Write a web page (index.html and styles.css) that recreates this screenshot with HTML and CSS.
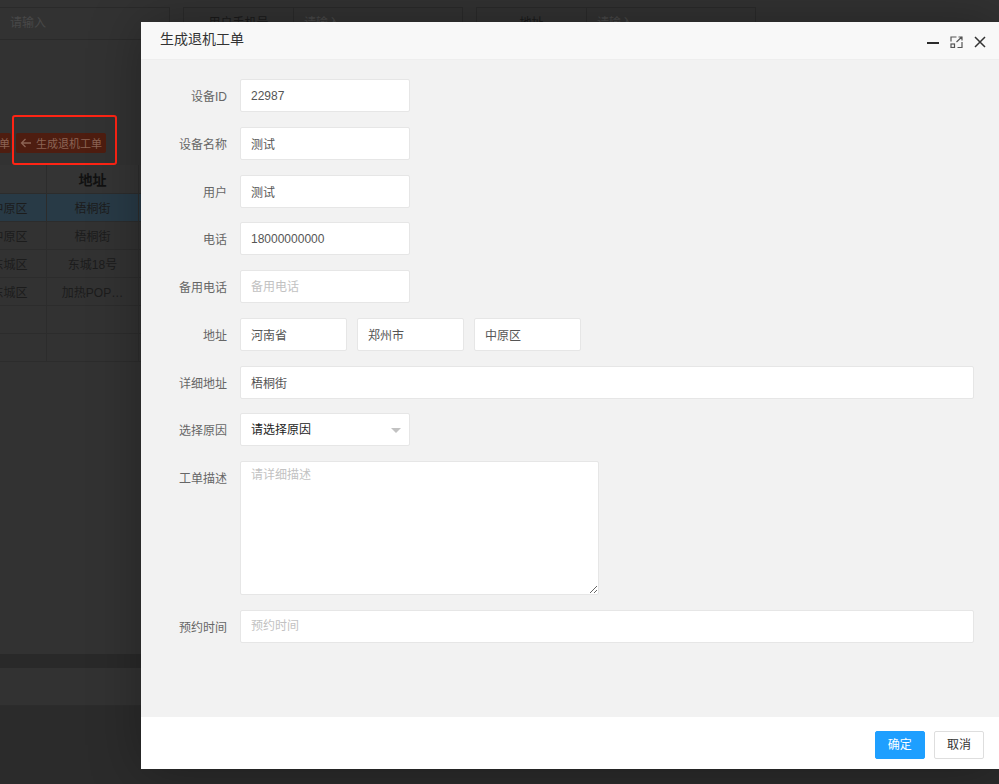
FILE: index.html
```html
<!DOCTYPE html>
<html lang="zh-CN">
<head>
  <meta charset="UTF-8">
  <title>生成退机工单</title>
  <link rel="stylesheet" href="styles.css">
</head>
<body>
  <div class="page">
    <div class="search-row">
      <div class="s-box s-input s-first">请输入</div>
      <div class="s-box s-label">用户手机号</div>
      <div class="s-box s-input">请输入</div>
      <div class="s-box s-label">地址</div>
      <div class="s-box s-input">请输入</div>
    </div>

    <div class="toolbar">
      <span class="tool-btn tool-cut">单</span>
      <span class="tool-btn">
        <svg width="12" height="12" viewBox="0 0 12 12"><path d="M11 6H1.5M5.5 2L1.5 6l4 4" fill="none" stroke="#8c6454" stroke-width="1.3"/></svg>
        生成退机工单
      </span>
    </div>

    <div class="grid">
      <div class="grid-row grid-head"><div class="c1"></div><div class="c2">地址</div><div class="c3"></div></div>
      <div class="grid-row grid-on"><div class="c1">中原区</div><div class="c2">梧桐街</div><div class="c3"></div></div>
      <div class="grid-row"><div class="c1">中原区</div><div class="c2">梧桐街</div><div class="c3"></div></div>
      <div class="grid-row"><div class="c1">东城区</div><div class="c2">东城18号</div><div class="c3"></div></div>
      <div class="grid-row"><div class="c1">东城区</div><div class="c2">加热POP…</div><div class="c3"></div></div>
      <div class="grid-row"><div class="c1"></div><div class="c2"></div><div class="c3"></div></div>
      <div class="grid-row"><div class="c1"></div><div class="c2"></div><div class="c3"></div></div>
    </div>

    <div class="grid-fill"></div>
    <div class="grid-scroll"></div>
    <div class="grid-pager"></div>
    <div class="page-foot"></div>
  </div>

  <div class="mark"></div>

  <div class="layer">
    <div class="layer-title">
      生成退机工单
      <span class="layer-setwin">
        <svg width="12" height="12" viewBox="0 0 12 12"><rect x="0" y="6" width="12" height="2" fill="#2b2b2b"/></svg>
        <svg width="13" height="12" viewBox="0 0 13 12"><path d="M1 5.5V1h5.5M12 6v5.5H7.5M6.5 6L12 0.8M8.5 1H12v3.5" fill="none" stroke="#555" stroke-width="1.2"/><rect x="1" y="8" width="3.5" height="3.5" fill="none" stroke="#555" stroke-width="1.2"/></svg>
        <svg width="12" height="12" viewBox="0 0 12 12"><path d="M1 1l10 10M11 1L1 11" fill="none" stroke="#333" stroke-width="1.5"/></svg>
      </span>
    </div>

    <div class="layer-content">
      <form class="form">
        <div class="form-item">
          <label class="form-label">设备ID</label>
          <input class="input" value="22987">
        </div>
        <div class="form-item">
          <label class="form-label">设备名称</label>
          <input class="input" value="测试">
        </div>
        <div class="form-item">
          <label class="form-label">用户</label>
          <input class="input" value="测试">
        </div>
        <div class="form-item">
          <label class="form-label">电话</label>
          <input class="input" value="18000000000">
        </div>
        <div class="form-item">
          <label class="form-label">备用电话</label>
          <input class="input" placeholder="备用电话">
        </div>
        <div class="form-item">
          <label class="form-label">地址</label>
          <div class="input-group">
            <input class="input input-sm" value="河南省">
            <input class="input input-sm" value="郑州市">
            <input class="input input-sm" value="中原区">
          </div>
        </div>
        <div class="form-item">
          <label class="form-label">详细地址</label>
          <input class="input input-block" value="梧桐街">
        </div>
        <div class="form-item">
          <label class="form-label">选择原因</label>
          <div class="input select">请选择原因<i class="select-edge"></i></div>
        </div>
        <div class="form-item">
          <label class="form-label">工单描述</label>
          <textarea class="textarea" placeholder="请详细描述"></textarea>
        </div>
        <div class="form-item">
          <label class="form-label">预约时间</label>
          <input class="input input-block" placeholder="预约时间">
        </div>
      </form>
    </div>

    <div class="layer-btn">
      <a class="btn btn-primary">确定</a>
      <a class="btn">取消</a>
    </div>
  </div>
</body>
</html>
```

FILE: styles.css
```css
* {
  box-sizing: border-box;
}
body {
  margin: 0;
  height: 784px;
  overflow: hidden;
  font-family: "Liberation Sans", "Noto Sans CJK SC", sans-serif;
  font-size: 12px;
  color: #1c1c1c;
  background-color: #323232;
}

/* dimmed page behind the dialog */
.page {
  height: 784px;
  display: flex;
  flex-direction: column;
}
.search-row {
  display: flex;
  margin-top: 7px;
  height: 33px;
}
.s-box {
  height: 33px;
  line-height: 31px;
  border: 1px solid #2a2a2a;
}
.s-input {
  width: 170px;
  padding-left: 10px;
  color: #484848;
}
.s-first {
  margin-left: -1px;
  width: 171px;
}
.s-label {
  width: 111px;
  margin-left: 13px;
  margin-right: -1px;
  text-align: center;
  color: #1a1a1a;
}
.toolbar {
  display: flex;
  height: 20px;
  margin-top: 93px;
}
.tool-btn {
  display: flex;
  align-items: center;
  gap: 4px;
  height: 20px;
  padding: 0 4px;
  margin-left: 5px;
  font-size: 11px;
  background-color: #4e1d10;
  color: #8c6454;
  border-radius: 2px;
}
.tool-cut {
  margin-left: -1px;
  padding: 0 1px 0 0;
}
.grid {
  margin-top: 12px;
  margin-left: -27px;
}
.grid-row {
  display: flex;
  height: 28px;
  line-height: 31px;
  border-bottom: 1px solid #2c2c2c;
  text-align: center;
  overflow: hidden;
}
.grid-head {
  height: 29px;
  line-height: 31px;
  font-size: 14px;
  font-weight: bold;
  color: #111;
  background-color: #343434;
}
.grid-on {
  background-color: #283a46;
}
.c1 {
  width: 74px;
  border-right: 1px solid #2c2c2c;
}
.c2 {
  width: 92px;
  border-right: 1px solid #2c2c2c;
}
.c3 {
  flex: 1;
}
.grid-fill {
  flex: 1;
}
.grid-scroll {
  height: 14px;
  background-color: #292929;
}
.grid-pager {
  height: 38px;
  border-bottom: 1px solid #2c2c2c;
}
.page-foot {
  height: 78px;
  background-color: #2b2b2b;
}

/* red annotation frame */
.mark {
  position: absolute;
  left: 12px;
  top: 115px;
  width: 105px;
  height: 50px;
  border: 2px solid #ff2414;
  border-radius: 3px;
}

/* dialog */
.layer {
  position: fixed;
  left: 141px;
  top: 22px;
  width: 858px;
  height: 747px;
  display: flex;
  flex-direction: column;
  background-color: #fff;
  box-shadow: 1px 1px 50px rgba(0, 0, 0, 0.3);
}
.layer-title {
  position: relative;
  height: 38px;
  line-height: 34px;
  padding-left: 19px;
  font-size: 14px;
  color: #333;
  background-color: #f8f8f8;
  border-bottom: 1px solid #eee;
}
.layer-setwin {
  position: absolute;
  right: 13px;
  top: 14px;
  display: flex;
  align-items: center;
  gap: 11px;
  line-height: 0;
}
.layer-content {
  flex: 1;
  padding: 19px 25px 0 0;
  background-color: #f2f2f2;
}
.form-item {
  display: flex;
  margin-bottom: 14.75px;
}
.form-label {
  flex: 0 0 99px;
  height: 33px;
  padding: 3px 13px 0 0;
  line-height: 30px;
  text-align: right;
  color: #666;
}
.input, .textarea {
  height: 33px;
  width: 170px;
  padding: 0 10px;
  border: 1px solid #e6e6e6;
  border-radius: 2px;
  background-color: #fff;
  font-family: inherit;
  font-size: 12px;
  color: #555;
  outline: none;
}
.input::placeholder, .textarea::placeholder {
  color: #c2c2c2;
}
.input-group {
  display: flex;
  gap: 10px;
}
.input-sm {
  width: 107px;
}
.input-block {
  flex: 1;
  width: auto;
}
.select {
  position: relative;
  line-height: 33px;
  color: #222;
}
.select-edge {
  position: absolute;
  right: 8px;
  top: 14px;
  border: 5px solid transparent;
  border-top-color: #c2c2c2;
}
.textarea {
  width: 359px;
  height: 134px;
  padding: 5px 10px;
  line-height: 16px;
}
.layer-btn {
  height: 52px;
  padding: 14px 15px 0;
  text-align: right;
  background-color: #fff;
}
.btn {
  display: inline-block;
  height: 28px;
  line-height: 26px;
  padding: 0 12px;
  margin-left: 6px;
  border: 1px solid #dedede;
  border-radius: 2px;
  background-color: #fff;
  color: #333;
  cursor: pointer;
}
.btn-primary {
  border-color: #1e9fff;
  background-color: #1e9fff;
  color: #fff;
}
```
